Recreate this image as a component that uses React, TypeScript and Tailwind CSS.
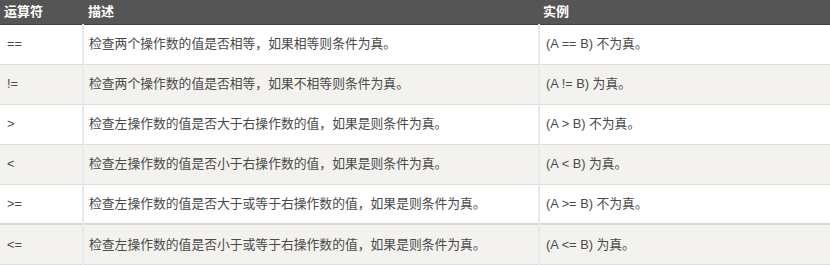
import React from 'react';

type Row = { op: string; desc: string; example: string };

const ROWS: Row[] = [
  { op: '==', desc: '检查两个操作数的值是否相等，如果相等则条件为真。', example: '(A == B) 不为真。' },
  { op: '!=', desc: '检查两个操作数的值是否相等，如果不相等则条件为真。', example: '(A != B) 为真。' },
  { op: '>', desc: '检查左操作数的值是否大于右操作数的值，如果是则条件为真。', example: '(A > B) 不为真。' },
  { op: '<', desc: '检查左操作数的值是否小于右操作数的值，如果是则条件为真。', example: '(A < B) 为真。' },
  { op: '>=', desc: '检查左操作数的值是否大于或等于右操作数的值，如果是则条件为真。', example: '(A >= B) 不为真。' },
  { op: '<=', desc: '检查左操作数的值是否小于或等于右操作数的值，如果是则条件为真。', example: '(A <= B) 为真。' },
];

const App: React.FC = () => {
  return (
    <div className="w-[830px] h-[265px] overflow-hidden bg-white font-['Liberation_Sans','Noto_Sans_CJK_SC',sans-serif]">
      <table className="w-full border-collapse table-fixed">
        <colgroup>
          <col className="w-[83px]" />
          <col className="w-[456px]" />
          <col />
        </colgroup>
        <thead>
          <tr className="h-[24px] bg-[#555555] border-b border-[#3e3e3e] text-white text-[13px] font-bold">
            <th className="text-left font-bold pl-[4px] py-0">运算符</th>
            <th className="text-left font-bold pl-[5px] py-0">描述</th>
            <th className="text-left font-bold pl-[4px] py-0">实例</th>
          </tr>
        </thead>
        <tbody className="text-[12.8px] text-[#4a4a4a]">
          {ROWS.map((r, i) => (
            <tr
              key={r.op}
              className={`${i % 2 === 0 ? 'bg-white' : 'bg-[#f3f2ef]'} ${i === 4 ? 'border-b-2 border-[#d8d8d8]' : 'border-b border-[#dddddd]'} h-[40px]`}
            >
              <td className="pl-[7px] align-middle border-r-2 border-[#e9e9e9]">{r.op}</td>
              <td className="pl-[5px] align-middle border-r-2 border-[#e9e9e9]">{r.desc}</td>
              <td className="pl-[6px] align-middle">{r.example}</td>
            </tr>
          ))}
        </tbody>
      </table>
    </div>
  );
};

export default App;
